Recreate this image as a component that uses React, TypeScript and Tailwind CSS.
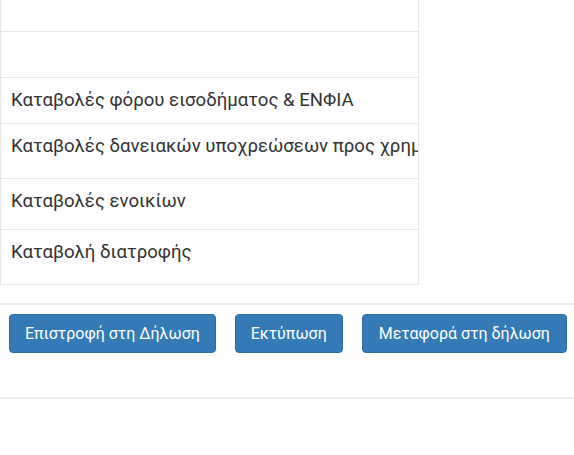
import React from "react";

const rows: { text: string; h: string }[] = [
  { text: "", h: "h-[31px]" },
  { text: "", h: "h-[46px]" },
  { text: "Καταβολές φόρου εισοδήματος & ΕΝΦΙΑ", h: "h-[46px]" },
  { text: "Καταβολές δανειακών υποχρεώσεων προς χρηματοπιστωτικά ιδρύματα", h: "h-[55px]" },
  { text: "Καταβολές ενοικίων", h: "h-[51px]" },
  { text: "Καταβολή διατροφής", h: "h-[55px]" },
];

export default function App() {
  return (
    <div className="w-[574px] h-[455px] bg-white overflow-hidden" style={{ fontFamily: "Roboto, 'Noto Sans', sans-serif" }}>
      <div className="w-[419px] border-x border-b border-[#e6e6e6]">
        {rows.map((r, i) => (
          <div
            key={i}
            className={`${r.h} ${i > 0 ? "border-t border-[#e6e6e6]" : ""} overflow-hidden whitespace-nowrap pl-[10px] pt-[10px] text-[18.6px] leading-[24px] text-[#333333]`}
          >
            {r.text}
          </div>
        ))}
      </div>
      <div className="mt-[18px] border-t-2 border-[#eeeeee]">
        <div className="flex gap-[19px] pl-[9px] pt-[9px] h-[92px]">
          <button className="h-[39px] px-[15px] rounded-[4px] bg-[#337ab7] border border-[#2e6da4] text-white text-[16px]">
            Επιστροφή στη Δήλωση
          </button>
          <button className="h-[39px] px-[15px] rounded-[4px] bg-[#337ab7] border border-[#2e6da4] text-white text-[16px]">
            Εκτύπωση
          </button>
          <button className="h-[39px] px-[16px] rounded-[4px] bg-[#337ab7] border border-[#2e6da4] text-white text-[16px]">
            Μεταφορά στη δήλωση
          </button>
        </div>
        <div className="border-t-2 border-[#eeeeee]" />
      </div>
    </div>
  );
}
